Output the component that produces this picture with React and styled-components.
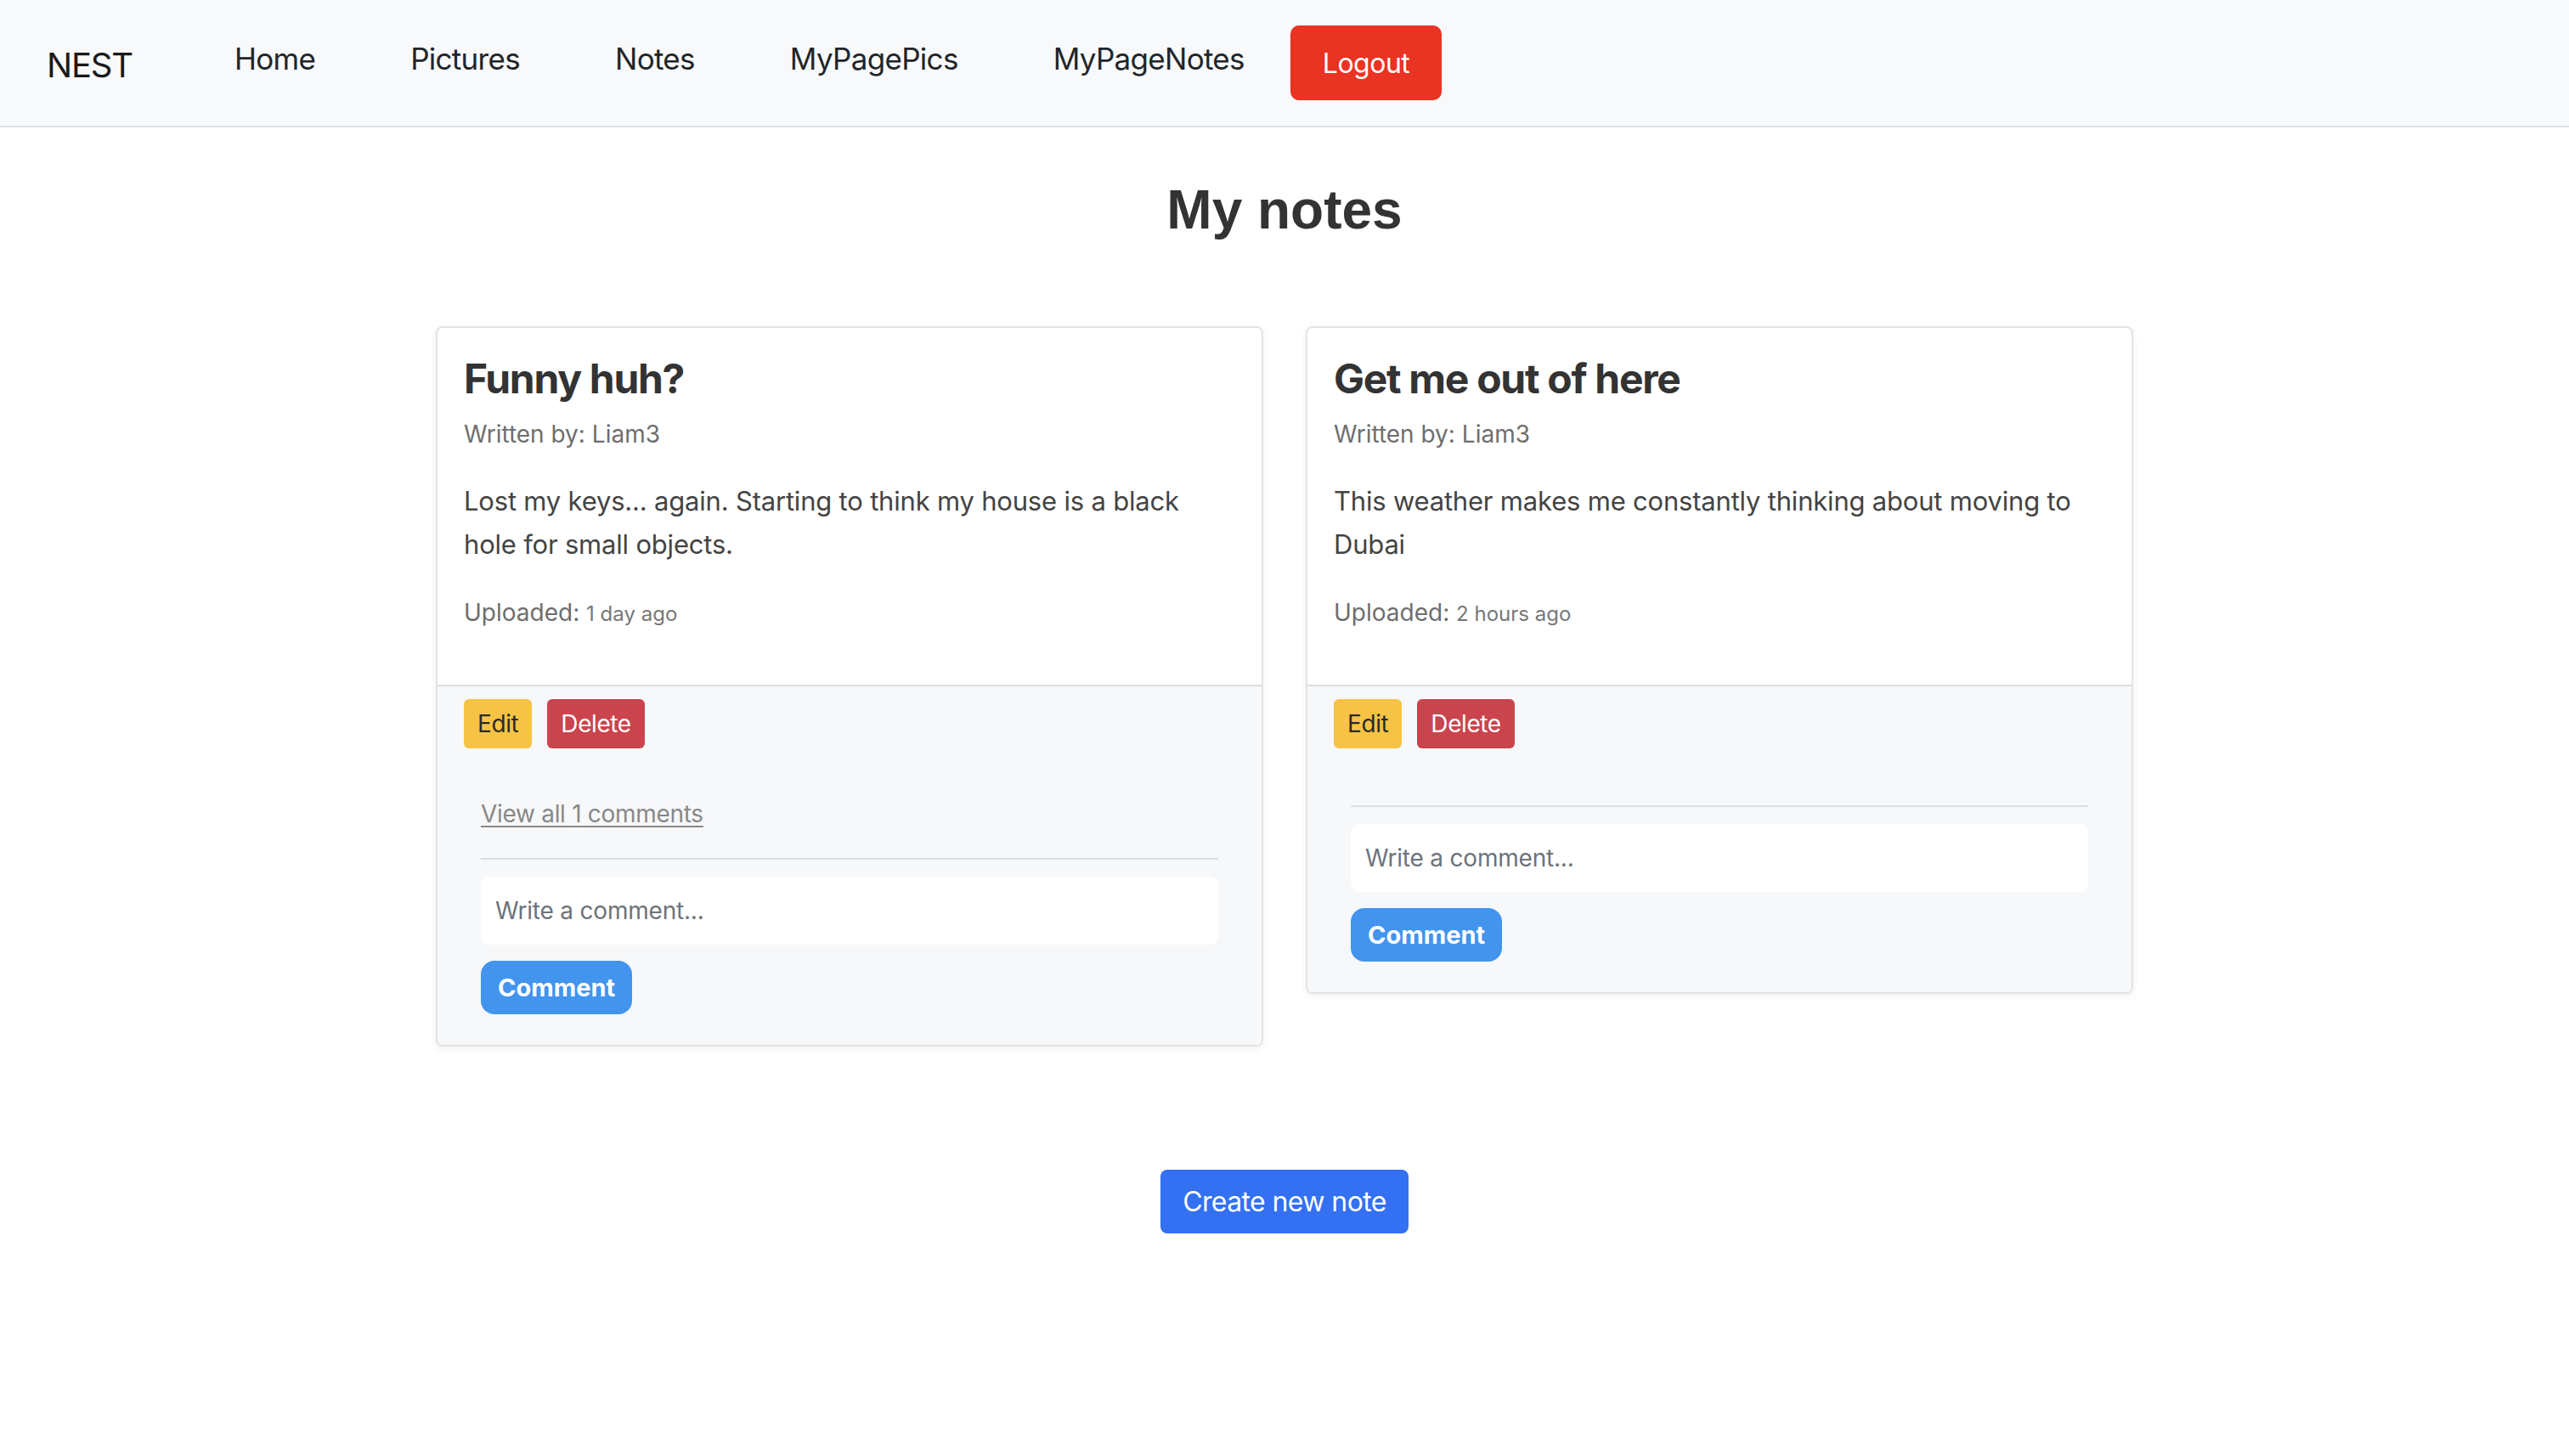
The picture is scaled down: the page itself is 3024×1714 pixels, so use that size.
import React from "react";
import styled, { createGlobalStyle } from "styled-components";

const Global = createGlobalStyle`
  * { box-sizing: border-box; }
  html, body { margin: 0; padding: 0; background: #ffffff; }
  body { font-family: Inter, "Noto Sans", sans-serif; color: #212529; }
`;

const NavBar = styled.nav`
  height: 150px;
  background: #f8f9fa;
  border-bottom: 2px solid #dee2e6;
  display: flex;
  align-items: center;
  padding-left: 55px;
`;

const Brand = styled.a`
  font-family: Inter, sans-serif;
  font-size: 40px;
  color: #1a1a1a;
  text-decoration: none;
  margin-right: 120px;
  letter-spacing: -1.2px;
  padding-top: 4px;
`;

const NavLinks = styled.div`
  display: flex;
  align-items: center;
  gap: 112px;
`;

const NavLink = styled.a`
  font-size: 35px;
  color: #212529;
  text-decoration: none;
  padding-bottom: 10px;
  letter-spacing: -0.7px;
`;

const LogoutButton = styled.button`
  margin-left: 54px;
  height: 88px;
  padding: 0 38px;
  background: #e93323;
  color: #ffffff;
  border: none;
  border-radius: 10px;
  font-family: Inter, sans-serif;
  font-size: 32px;
  letter-spacing: -0.5px;
  margin-top: 0;
`;

const Main = styled.main`
  display: flex;
  flex-direction: column;
  align-items: center;
`;

const PageTitle = styled.h1`
  margin: 59px 0 98px;
  font-family: "Liberation Sans", Arial, sans-serif;
  font-weight: 700;
  font-size: 64px;
  line-height: 1.2;
  color: #333333;
`;

const CardGrid = styled.div`
  display: grid;
  grid-template-columns: repeat(2, 974px);
  gap: 50px;
  align-items: start;
`;

const Card = styled.article`
  background: #ffffff;
  border: 2px solid #e3e3e3;
  border-radius: 8px;
  box-shadow: 0 3px 8px rgba(0, 0, 0, 0.06);
  overflow: hidden;
`;

const CardBody = styled.div`
  padding: 31px 31px 30px;
`;

const CardTitle = styled.h2`
  margin: 0 0 16px;
  font-size: 48px;
  line-height: 1.2;
  font-weight: 700;
  color: #333333;
  letter-spacing: -1.3px;
`;

const Meta = styled.p`
  margin: 0 0 32px;
  font-size: 28px;
  line-height: 42px;
  color: #6e6e6e;
`;

const Small = styled.small`
  font-size: 24px;
  color: #777777;
`;

const BodyText = styled.p`
  margin: 0 0 34px;
  font-size: 31px;
  line-height: 51px;
  letter-spacing: -0.2px;
  color: #444444;
`;

const CardFooter = styled.div`
  background: #f7f8fa;
  border-top: 2px solid #dcdde0;
  padding: 15px 31px 16px;
`;

const ButtonRow = styled.div`
  display: flex;
  gap: 18px;
`;

const SmallButton = styled.button`
  height: 58px;
  padding: 0 16px;
  border: none;
  border-radius: 6px;
  font-family: Inter, sans-serif;
  font-size: 28px;
  letter-spacing: -0.4px;
  background: ${(p) => (p.$variant === "danger" ? "#ca444d" : "#f6c344")};
  color: ${(p) => (p.$variant === "danger" ? "#ffffff" : "#2a2a2a")};
`;

const CommentSection = styled.div`
  margin-top: 16px;
  padding: 20px;
`;

const CommentList = styled.div`
  padding-bottom: 31px;
  border-bottom: 2px solid #dcdde0;
  margin-bottom: 20px;
`;

const ViewAll = styled.a`
  display: block;
  margin-top: 20px;
  font-size: 28px;
  line-height: 42px;
  letter-spacing: -0.3px;
  color: #888888;
  text-decoration: underline;
  text-underline-offset: 4px;
  text-decoration-thickness: 2px;
`;

const CommentInput = styled.input`
  display: block;
  width: 100%;
  height: 80px;
  padding: 0 17px;
  border: none;
  border-radius: 10px;
  background: #ffffff;
  font-family: Inter, sans-serif;
  font-size: 28px;
  letter-spacing: -0.2px;
  color: #333;
  outline: none;
  &::placeholder { color: #6c737b; }
`;

const CommentButton = styled.button`
  margin-top: 19px;
  height: 63px;
  padding: 0 20px;
  background: #4294ed;
  color: #ffffff;
  border: none;
  border-radius: 16px;
  font-family: Inter, sans-serif;
  font-weight: 700;
  font-size: 29px;
`;

const CreateButton = styled.button`
  margin-top: 145px;
  height: 75px;
  padding: 0 26px;
  background: #3370f2;
  color: #ffffff;
  border: none;
  border-radius: 8px;
  font-family: Inter, sans-serif;
  font-size: 32px;
  letter-spacing: -0.6px;
`;

const notes = [
  {
    title: "Funny huh?",
    author: "Liam3",
    text: "Lost my keys... again. Starting to think my house is a black hole for small objects.",
    uploaded: "1 day ago",
    comments: 1,
  },
  {
    title: "Get me out of here",
    author: "Liam3",
    text: "This weather makes me constantly thinking about moving to Dubai",
    uploaded: "2 hours ago",
    comments: 0,
  },
];

function NoteCard({ note }) {
  return (
    <Card>
      <CardBody>
        <CardTitle>{note.title}</CardTitle>
        <Meta>Written by: {note.author}</Meta>
        <BodyText>{note.text}</BodyText>
        <Meta>
          Uploaded: <Small>{note.uploaded}</Small>
        </Meta>
      </CardBody>
      <CardFooter>
        <ButtonRow>
          <SmallButton>Edit</SmallButton>
          <SmallButton $variant="danger">Delete</SmallButton>
        </ButtonRow>
        <CommentSection>
          <CommentList>
            {note.comments > 0 && (
              <ViewAll href="#">View all {note.comments} comments</ViewAll>
            )}
          </CommentList>
          <CommentInput placeholder="Write a comment..." />
          <CommentButton>Comment</CommentButton>
        </CommentSection>
      </CardFooter>
    </Card>
  );
}

export default function App() {
  return (
    <>
      <Global />
      <NavBar>
        <Brand href="#">NEST</Brand>
        <NavLinks>
          <NavLink href="#">Home</NavLink>
          <NavLink href="#">Pictures</NavLink>
          <NavLink href="#">Notes</NavLink>
          <NavLink href="#">MyPagePics</NavLink>
          <NavLink href="#">MyPageNotes</NavLink>
        </NavLinks>
        <LogoutButton>Logout</LogoutButton>
      </NavBar>
      <Main>
        <PageTitle>My notes</PageTitle>
        <CardGrid>
          {notes.map((n) => (
            <NoteCard key={n.title} note={n} />
          ))}
        </CardGrid>
        <CreateButton>Create new note</CreateButton>
      </Main>
    </>
  );
}
